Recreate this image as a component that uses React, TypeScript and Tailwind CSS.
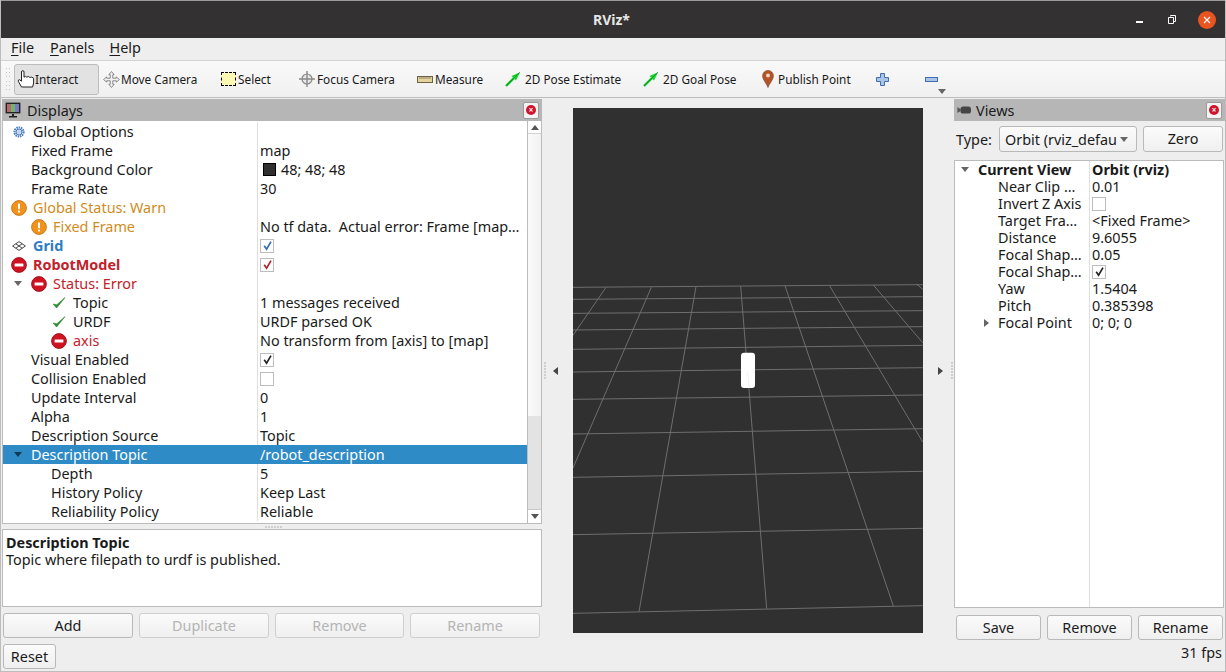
import type { ReactNode } from 'react'

const FONT = "font-['Noto_Sans',sans-serif]"

function GearIcon() {
  return (
    <svg viewBox="0 0 16 16" className="h-[14px] w-[14px]">
      <circle cx="8" cy="8" r="5.2" fill="none" stroke="#4c7fc4" strokeWidth="2.4" strokeDasharray="1.7 0.9" />
      <circle cx="8" cy="8" r="3.4" fill="#dbe7f6" stroke="#3f73bb" strokeWidth="1.1" />
      <circle cx="8" cy="8" r="1.3" fill="#fff" stroke="#6d97d0" strokeWidth="0.6" />
    </svg>
  )
}

function WarnIcon() {
  return (
    <svg viewBox="0 0 16 16" className="h-[16px] w-[16px]">
      <circle cx="8" cy="8" r="7.4" fill="#f0921e" stroke="#c8730f" strokeWidth="0.9" />
      <rect x="7" y="3.4" width="2" height="5.8" rx="0.6" fill="#fff" />
      <rect x="7" y="10.4" width="2" height="2" rx="0.6" fill="#fff" />
    </svg>
  )
}

function ErrorIcon() {
  return (
    <svg viewBox="0 0 16 16" className="h-[16px] w-[16px]">
      <circle cx="8" cy="8" r="7.4" fill="#cf1322" stroke="#9c0f19" strokeWidth="0.9" />
      <rect x="3.6" y="6.6" width="8.8" height="2.8" rx="0.5" fill="#fff" />
    </svg>
  )
}

function CheckIcon() {
  return (
    <svg viewBox="0 0 14 14" className="h-[14px] w-[14px]">
      <path d="M1 8 L4.6 12 L13 1.6 L4.8 8.8 Z" fill="#2c8a32" stroke="#2c8a32" strokeWidth="0.6" strokeLinejoin="round" />
    </svg>
  )
}

function GridIcon() {
  return (
    <svg viewBox="0 0 14 10" className="h-[10px] w-[14px]">
      <path d="M7 0.6 L13.4 5 L7 9.4 L0.6 5 Z M3.8 2.8 L10.2 7.2 M10.2 2.8 L3.8 7.2" fill="none" stroke="#444" strokeWidth="1" />
    </svg>
  )
}

function HandIcon() {
  return (
    <svg viewBox="0 0 18 18" className="h-[18px] w-[18px]">
      <path
        d="M4.5 17 L1.4 11.4 Q0.9 9.6 2.5 9.7 L4.5 11.2 V2 Q4.5 0.7 5.8 0.7 Q7 0.7 7 2 V7.2 Q8.5 5.6 9.8 7.2 Q11.3 5.6 12.7 7.4 Q14.6 6.4 16.6 8.2 V13 L15.6 17 Z"
        fill="#fff"
        stroke="#222"
        strokeWidth="1"
      />
    </svg>
  )
}

function ArrowDown({ className = 'fill-[#666]' }: { className?: string }) {
  return (
    <svg viewBox="0 0 8 5" className={`h-[5px] w-[8px] ${className}`}>
      <path d="M0 0 H8 L4 5 Z" />
    </svg>
  )
}

function Box({ mark }: { mark?: string }) {
  return (
    <span className="flex h-[14px] w-[14px] items-center justify-center border border-[#bdbdbd] bg-white">
      {mark && (
        <svg viewBox="0 0 12 12" className="h-[11px] w-[11px]">
          <path d="M2.4 6.2 L5 10 L9.8 1.8" fill="none" stroke={mark} strokeWidth="1.8" />
        </svg>
      )}
    </span>
  )
}

function Swatch() {
  return (
    <span className="flex items-center gap-[5px]">
      <span className="ml-[3px] h-[13px] w-[13px] border border-black bg-[#303030]" />
      48; 48; 48
    </span>
  )
}

type Row = {
  label: string
  pad: string
  labelClass?: string
  icon?: ReactNode
  arrow?: boolean
  value?: ReactNode
  selected?: boolean
}

const displayRows: Row[] = [
  { label: 'Global Options', pad: 'pl-[9px] gap-[7px]', icon: <GearIcon /> },
  { label: 'Fixed Frame', pad: 'pl-[28px]', value: 'map' },
  { label: 'Background Color', pad: 'pl-[28px]', value: <Swatch /> },
  { label: 'Frame Rate', pad: 'pl-[28px]', value: '30' },
  { label: 'Global Status: Warn', pad: 'pl-[8px] gap-[6px]', labelClass: 'text-[#d08c1c]', icon: <WarnIcon /> },
  {
    label: 'Fixed Frame',
    pad: 'pl-[28px] gap-[6px]',
    labelClass: 'text-[#d08c1c]',
    icon: <WarnIcon />,
    value: 'No tf data.  Actual error: Frame [map…',
  },
  { label: 'Grid', pad: 'pl-[9px] gap-[7px]', labelClass: 'font-bold text-[#2f7bc4]', icon: <GridIcon />, value: <Box mark="#2f6db5" /> },
  { label: 'RobotModel', pad: 'pl-[8px] gap-[6px]', labelClass: 'font-bold text-[#c4202a]', icon: <ErrorIcon />, value: <Box mark="#b0222a" /> },
  { label: 'Status: Error', pad: 'pl-[11px] gap-[6px]', labelClass: 'text-[#c4202a]', icon: <ErrorIcon />, arrow: true },
  { label: 'Topic', pad: 'pl-[49px] gap-[7px]', icon: <CheckIcon />, value: '1 messages received' },
  { label: 'URDF', pad: 'pl-[49px] gap-[7px]', icon: <CheckIcon />, value: 'URDF parsed OK' },
  { label: 'axis', pad: 'pl-[48px] gap-[6px]', labelClass: 'text-[#c4202a]', icon: <ErrorIcon />, value: 'No transform from [axis] to [map]' },
  { label: 'Visual Enabled', pad: 'pl-[28px]', value: <Box mark="#222" /> },
  { label: 'Collision Enabled', pad: 'pl-[28px]', value: <Box /> },
  { label: 'Update Interval', pad: 'pl-[28px]', value: '0' },
  { label: 'Alpha', pad: 'pl-[28px]', value: '1' },
  { label: 'Description Source', pad: 'pl-[28px]', value: 'Topic' },
  { label: 'Description Topic', pad: 'pl-[11px] gap-[6px]', arrow: true, value: '/robot_description', selected: true },
  { label: 'Depth', pad: 'pl-[48px]', value: '5' },
  { label: 'History Policy', pad: 'pl-[48px]', value: 'Keep Last' },
  { label: 'Reliability Policy', pad: 'pl-[48px]', value: 'Reliable' },
]

const viewRows: { label: string; value: ReactNode; arrow?: boolean }[] = [
  { label: 'Near Clip …', value: '0.01' },
  { label: 'Invert Z Axis', value: <Box /> },
  { label: 'Target Fra…', value: '<Fixed Frame>' },
  { label: 'Distance', value: '9.6055' },
  { label: 'Focal Shap…', value: '0.05' },
  { label: 'Focal Shap…', value: <Box mark="#222" /> },
  { label: 'Yaw', value: '1.5404' },
  { label: 'Pitch', value: '0.385398' },
  { label: 'Focal Point', value: '0; 0; 0', arrow: true },
]

// grid lines, read off the picture at 3x from (570,270)
const gridLines = [
  [9, 52, 1058, 44],
  [9, 88, 1058, 80],
  [9, 130, 1058, 122],
  [9, 180, 1058, 170],
  [9, 238, 1058, 226],
  [9, 306, 1058, 293],
  [9, 388, 1058, 375],
  [9, 492, 1058, 476],
  [9, 622, 1058, 604],
  [9, 794, 1058, 775],
  [9, 1030, 1058, 1007],
  [512, 48, 590, 1016],
  [378, 50, 207, 1025],
  [645, 47, 970, 1008],
  [244, 52, 9, 594],
  [108, 52, 9, 196],
  [778, 46, 1058, 516],
  [910, 45, 1058, 218],
  [1040, 42, 1058, 58],
]

function Viewport() {
  return (
    <svg viewBox="573 108 350 525" className="h-[525px] w-[350px] shrink-0 bg-[#303030]">
      <g transform="translate(570 270) scale(0.33333)" stroke="#6e6e6e" strokeWidth="3">
        {gridLines.map((l, i) => (
          <line key={i} x1={l[0]} y1={l[1]} x2={l[2]} y2={l[3]} />
        ))}
        <rect x="513" y="248" width="42" height="106" rx="9" fill="#fff" stroke="none" />
        <line x1="532" y1="306" x2="538" y2="354" stroke="#f0f0f0" />
      </g>
    </svg>
  )
}

function PanelTitle({ icon, title }: { icon: ReactNode; title: string }) {
  return (
    <div className="flex h-[22px] shrink-0 items-center bg-[#b6b6b6] pr-[3px] text-[#1a1a1a]">
      {icon}
      <span className="flex-1 pt-px">{title}</span>
      <span className="flex h-[17px] w-[16px] items-center justify-center rounded-[2px] border border-[#9a9a9a] bg-[#f4f4f4]">
        <span className="flex h-[10px] w-[10px] items-center justify-center rounded-full bg-[#d0142c] text-[8px] leading-none font-bold text-white">×</span>
      </span>
    </div>
  )
}

function QtButton({ label, disabled, className }: { label: string; disabled?: boolean; className: string }) {
  return (
    <button
      className={`flex items-center justify-center rounded-[3px] border bg-gradient-to-b from-[#fbfbfb] to-[#efefef] ${
        disabled ? 'border-[#cfcfcf] text-[#b4b4b4]' : 'border-[#b9b9b9] text-[#1a1a1a]'
      } ${className}`}
    >
      {label}
    </button>
  )
}

function Tool({ icon, label, className }: { icon: ReactNode; label: string; className: string }) {
  return (
    <div className={`flex h-[31px] shrink-0 items-center ${className}`}>
      {icon}
      <span className="pt-px text-[11.8px] whitespace-nowrap">{label}</span>
    </div>
  )
}

function PoseArrow() {
  return (
    <svg viewBox="0 0 16 16" className="mr-[4px] h-[16px] w-[16px]">
      <path d="M1 15 L9 7" stroke="#12c52a" strokeWidth="2.4" />
      <path d="M6.5 5 L15 1.2 L11 9.5 Z" fill="#16d432" />
      <path d="M1 15 L15 1" stroke="#0a6a18" strokeWidth="0.5" />
    </svg>
  )
}

function Toolbar() {
  return (
    <div className="flex h-[38px] shrink-0 items-center border-y border-[#d2d2d2] border-b-[#bdbdbd] bg-gradient-to-b from-[#f9f9f9] to-[#f0f0f0] pl-[5px] text-[#1a1a1a]">
      <div className="mr-[3px] grid h-[22px] w-[5px] grid-cols-2 content-between">
        {Array.from({ length: 12 }).map((_, i) => (
          <span key={i} className="h-px w-px bg-[#c4c4c4]" />
        ))}
      </div>
      <div className="flex h-[31px] w-[85px] shrink-0 items-center rounded-[3px] border border-[#bdbdbd] bg-[#e2e2e2] pl-[2px]">
        <HandIcon />
        <span className="pt-px text-[11.8px]">Interact</span>
      </div>
      <Tool
        className="w-[122px] pl-[4px]"
        label="Move Camera"
        icon={
          <svg viewBox="0 0 16 16" className="mr-[1px] h-[17px] w-[17px]">
            <path d="M8 0.5 L10.5 3.5 H9.2 V6.8 H12.5 V5.5 L15.5 8 L12.5 10.5 V9.2 H9.2 V12.5 H10.5 L8 15.5 L5.5 12.5 H6.8 V9.2 H3.5 V10.5 L0.5 8 L3.5 5.5 V6.8 H6.8 V3.5 H5.5 Z" fill="#f2f2f2" stroke="#777" strokeWidth="0.8" />
          </svg>
        }
      />
      <Tool
        className="w-[77px]"
        label="Select"
        icon={<span className="mr-[2px] h-[14px] w-[15px] border border-dashed border-black bg-[#fdf8b4]" />}
      />
      <Tool
        className="w-[119px]"
        label="Focus Camera"
        icon={
          <svg viewBox="0 0 18 18" className="mr-[1px] h-[18px] w-[18px]">
            <circle cx="9" cy="9" r="5" fill="#e8e8e8" stroke="#888" strokeWidth="1.2" />
            <path d="M9 1 V17 M1 9 H17 M6 9 H12 M9 6 V12" stroke="#888" strokeWidth="1.4" />
          </svg>
        }
      />
      <Tool
        className="w-[88px]"
        label="Measure"
        icon={
          <svg viewBox="0 0 16 7" className="mr-[2px] h-[7px] w-[16px]">
            <rect x="0.5" y="0.5" width="15" height="6" fill="#e3d49b" stroke="#6b6248" />
            <path d="M3 1 V3 M5 1 V3 M7 1 V3 M9 1 V3 M11 1 V3 M13 1 V3" stroke="#6b6248" strokeWidth="0.7" />
          </svg>
        }
      />
      <Tool className="w-[138px]" label="2D Pose Estimate" icon={<PoseArrow />} />
      <Tool className="w-[119px]" label="2D Goal Pose" icon={<PoseArrow />} />
      <Tool
        className="w-[114px]"
        label="Publish Point"
        icon={
          <svg viewBox="0 0 12 18" className="mr-[4px] h-[18px] w-[12px]">
            <path d="M6 17.5 C4.5 13 0.6 10 0.6 5.8 A5.4 5.4 0 0 1 11.4 5.8 C11.4 10 7.5 13 6 17.5 Z" fill="#b4542a" stroke="#7a3a20" strokeWidth="0.6" />
            <circle cx="6" cy="5.5" r="1.9" fill="#f0d8b8" />
          </svg>
        }
      />
      <div className="flex w-[49px] shrink-0">
        <svg viewBox="0 0 13 13" className="h-[13px] w-[13px]">
          <path d="M4.5 0.5 H8.5 V4.5 H12.5 V8.5 H8.5 V12.5 H4.5 V8.5 H0.5 V4.5 H4.5 Z" fill="#a9c4e6" stroke="#3f6fae" />
        </svg>
      </div>
      <svg viewBox="0 0 13 5" className="h-[5px] w-[13px]">
        <rect x="0.5" y="0.5" width="12" height="4" fill="#a9c4e6" stroke="#3f6fae" />
      </svg>
      <div className="mt-[25px]">
        <ArrowDown />
      </div>
    </div>
  )
}

function DisplaysPanel() {
  return (
    <div className="flex w-[540px] shrink-0 flex-col">
      <PanelTitle
        title="Displays"
        icon={
          <svg viewBox="0 0 16 16" className="mr-[6px] ml-[3px] h-[16px] w-[16px]">
            <rect x="0.6" y="0.6" width="14.8" height="10.8" fill="#222" />
            <rect x="2" y="2" width="4" height="8" fill="#b86a6a" />
            <rect x="6" y="2" width="4" height="8" fill="#6fb56f" />
            <rect x="10" y="2" width="4" height="8" fill="#7a7ac4" />
            <path d="M7 12 H9 V14 H12 V15.4 H4 V14 H7 Z" fill="#222" />
          </svg>
        }
      />
      <div className="flex h-[403px] shrink-0 border border-t-0 border-[#bcbcbc] bg-white">
        <div className="flex-1 overflow-hidden pt-px">
          {displayRows.map((r, i) => (
            <div key={i} className={`flex h-[19px] items-center ${r.selected ? 'bg-[#2e8bc6] text-white' : 'text-[#1a1a1a]'}`}>
              <div className={`flex w-[254px] shrink-0 items-center ${r.pad}`}>
                {r.arrow && (
                  <span className="mr-[3px]">
                    <ArrowDown className={r.selected ? 'fill-[#123a55]' : 'fill-[#666]'} />
                  </span>
                )}
                {r.icon}
                <span className={`whitespace-pre ${r.labelClass ?? ''}`}>{r.label}</span>
              </div>
              <div className={`flex h-[19px] flex-1 items-center border-l pl-[2px] whitespace-pre ${r.selected ? 'border-transparent' : 'border-[#dedede]'}`}>
                {r.value}
              </div>
            </div>
          ))}
        </div>
        <div className="flex w-[14px] shrink-0 flex-col border-l border-[#bcbcbc]">
          <div className="flex h-[13px] items-center justify-center border-b border-[#d4d4d4]">
            <ArrowDown className="rotate-180 fill-[#555]" />
          </div>
          <div className="h-[282px] bg-gradient-to-r from-[#fafafa] to-[#f2f2f2]" />
          <div className="flex-1 bg-[#e3e3e3]" />
          <div className="flex h-[14px] items-center justify-center border-t border-[#c8c8c8]">
            <ArrowDown className="fill-[#555]" />
          </div>
        </div>
      </div>
      <div className="flex h-[5px] shrink-0 items-center gap-px pl-[263px]">
        {[0, 1, 2, 3, 4, 5].map((i) => (
          <span key={i} className="h-[2px] w-[2px] bg-[#cfcfcf]" />
        ))}
      </div>
      <div className="h-[78px] shrink-0 border border-[#bcbcbc] bg-white px-[3px] pt-[4px] text-[#1a1a1a]">
        <div className="h-[17px] leading-[17px] font-bold">Description Topic</div>
        <div className="h-[17px] leading-[17px]">Topic where filepath to urdf is published.</div>
      </div>
      <div className="mt-[6px] flex gap-[6px] pl-[1px]">
        <QtButton label="Add" className="h-[25px] w-[130px]" />
        <QtButton label="Duplicate" disabled className="h-[25px] w-[130px]" />
        <QtButton label="Remove" disabled className="h-[25px] w-[129px]" />
        <QtButton label="Rename" disabled className="h-[25px] w-[130px]" />
      </div>
      <div className="mt-[6px] pl-[1px]">
        <QtButton label="Reset" className="h-[25px] w-[53px]" />
      </div>
    </div>
  )
}

function HandleDots() {
  return (
    <div className="flex flex-col gap-px">
      {[0, 1, 2, 3, 4, 5].map((i) => (
        <span key={i} className="h-[2px] w-[2px] bg-[#cfcfcf]" />
      ))}
    </div>
  )
}

function Handle({ dir }: { dir: 'left' | 'right' }) {
  const arrow = (
    <svg viewBox="0 0 5 8" className="h-[8px] w-[5px] fill-[#444]">
      <path d={dir === 'left' ? 'M5 0 V8 L0 4 Z' : 'M0 0 V8 L5 4 Z'} />
    </svg>
  )
  return dir === 'left' ? (
    <div className="flex w-[31px] shrink-0 items-center gap-[7px] pl-[2px]">
      <HandleDots />
      {arrow}
    </div>
  ) : (
    <div className="flex w-[31px] shrink-0 items-center gap-[8px] pl-[15px]">
      {arrow}
      <HandleDots />
    </div>
  )
}

function ViewsPanel() {
  return (
    <div className="flex w-[271px] shrink-0 flex-col">
      <PanelTitle
        title="Views"
        icon={
          <svg viewBox="0 0 16 10" className="mr-[5px] ml-[3px] h-[10px] w-[14px]">
            <path d="M0.5 1.5 L4 4 V6 L0.5 8.5 Z" fill="#555" />
            <rect x="4" y="1" width="12" height="8" rx="3" fill="#444" />
          </svg>
        }
      />
      <div className="mt-[5px] flex h-[26px] shrink-0 items-center pl-[2px] text-[#1a1a1a]">
        <span className="w-[43px] pt-px">Type:</span>
        <div className="flex h-[26px] w-[138px] items-center overflow-hidden rounded-[3px] border border-[#b9b9b9] bg-gradient-to-b from-[#fbfbfb] to-[#efefef] pl-[5px]">
          <span className="w-[112px] pt-px whitespace-nowrap">Orbit (rviz_defau</span>
          <span className="ml-[3px]">
            <ArrowDown />
          </span>
        </div>
        <QtButton label="Zero" className="ml-[6px] h-[26px] w-[80px]" />
      </div>
      <div className="mt-[8px] mr-[1px] h-[448px] shrink-0 border border-[#bcbcbc] bg-white text-[#1a1a1a]">
        <div className="flex h-full">
          <div className="w-[135px] shrink-0 border-r border-[#dedede]">
            <div className="flex h-[17px] items-center pl-[6px] font-bold">
              <ArrowDown />
              <span className="ml-[9px]">Current View</span>
            </div>
            {viewRows.map((r, i) => (
              <div key={i} className="flex h-[17px] items-center pl-[43px] whitespace-nowrap">
                {r.arrow && (
                  <svg viewBox="0 0 5 8" className="-ml-[14px] mr-[9px] h-[8px] w-[5px] fill-[#666]">
                    <path d="M0 0 V8 L5 4 Z" />
                  </svg>
                )}
                {r.label}
              </div>
            ))}
          </div>
          <div className="flex-1 pl-[2px]">
            <div className="flex h-[17px] items-center font-bold">Orbit (rviz)</div>
            {viewRows.map((r, i) => (
              <div key={i} className="flex h-[17px] items-center">
                {r.value}
              </div>
            ))}
          </div>
        </div>
      </div>
      <div className="mt-[7px] flex gap-[6px] pl-[2px]">
        <QtButton label="Save" className="h-[25px] w-[85px]" />
        <QtButton label="Remove" className="h-[25px] w-[85px]" />
        <QtButton label="Rename" className="h-[25px] w-[85px]" />
      </div>
      <div className="mt-[2px] flex h-[22px] items-center justify-end pr-[3px] text-[#1a1a1a]">31 fps</div>
    </div>
  )
}

export default function App() {
  return (
    <div className={`flex h-[672px] w-[1226px] flex-col overflow-hidden border-x border-b border-[#bdbdbd] bg-[#eeeeee] text-[14.4px] ${FONT}`}>
      <div className="flex h-[38px] shrink-0 items-center border-t border-[#9a9a9a] bg-[#333131]">
        <div className="flex-1 pl-[592px] text-[14px] font-bold text-[#e6e6e6]">RViz*</div>
        <span className="mt-[5px] mr-[25px] h-[2px] w-[7px] bg-white" />
        <svg viewBox="0 0 8 9" className="mr-[22px] h-[9px] w-[8px]">
          <path d="M2.5 1.5 V0.5 H7.5 V6.5 H6 M0.5 2.5 H5.5 V8.5 H0.5 Z" fill="none" stroke="#fff" />
        </svg>
        <span className="mr-[9px] flex h-[18px] w-[18px] items-center justify-center rounded-full bg-[#e95420]">
          <svg viewBox="0 0 8 8" className="h-[8px] w-[8px]">
            <path d="M1 1 L7 7 M7 1 L1 7" stroke="#fff" strokeWidth="1.1" />
          </svg>
        </span>
      </div>
      <div className="flex h-[22px] shrink-0 items-center pb-[2px] pl-[10px] text-[#1a1a1a]">
        <span className="mr-[16px]"><u className="underline-offset-2">F</u>ile</span>
        <span className="mr-[15px]"><u className="underline-offset-2">P</u>anels</span>
        <span><u className="underline-offset-2">H</u>elp</span>
      </div>
      <Toolbar />
      <div className="flex flex-1 items-stretch pt-px pl-px">
        <DisplaysPanel />
        <div className="flex-1 pt-[9px]">
          <div className="flex h-[525px] items-stretch">
            <Handle dir="left" />
            <Viewport />
            <Handle dir="right" />
          </div>
        </div>
        <ViewsPanel />
      </div>
    </div>
  )
}
